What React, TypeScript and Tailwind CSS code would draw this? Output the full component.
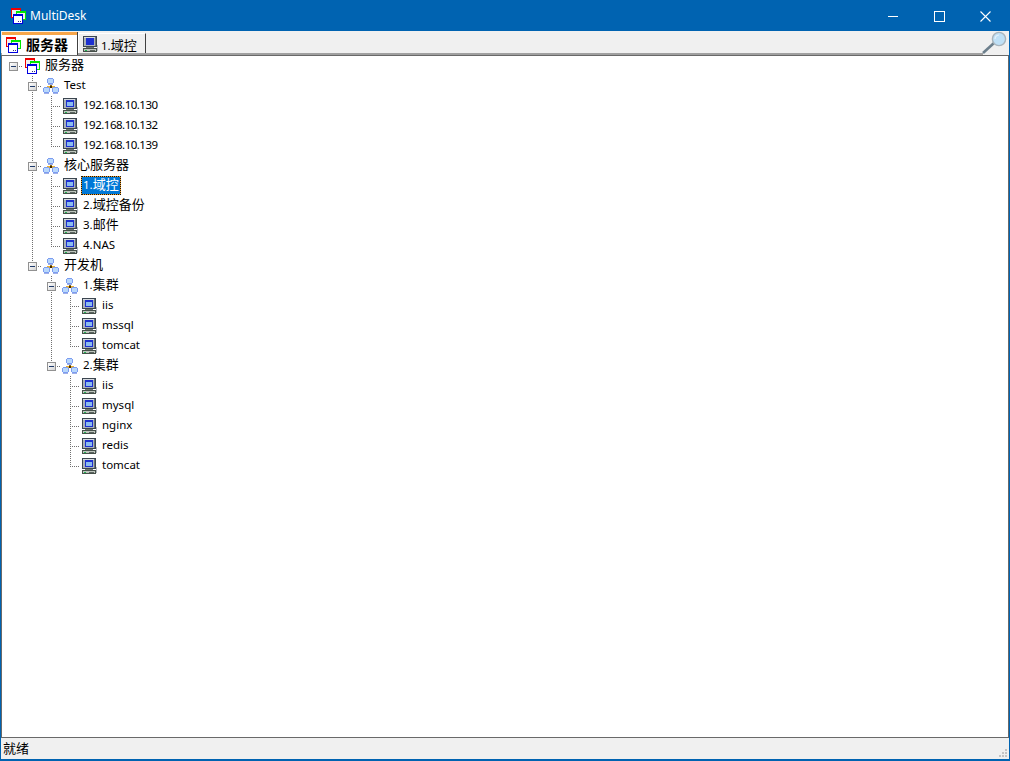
import React from "react";

type Kind = "root" | "group" | "pc";

interface TreeRow {
  label: string;
  kind: Kind;
  // one flag per ancestor level: does the vertical line carry on through this row
  guides: boolean[];
  last?: boolean;
  selected?: boolean;
}

const rows: TreeRow[] = [
  { label: "服务器", kind: "root", guides: [], last: true },
  { label: "Test", kind: "group", guides: [false] },
  { label: "192.168.10.130", kind: "pc", guides: [false, true] },
  { label: "192.168.10.132", kind: "pc", guides: [false, true] },
  { label: "192.168.10.139", kind: "pc", guides: [false, true], last: true },
  { label: "核心服务器", kind: "group", guides: [false] },
  { label: "1.域控", kind: "pc", guides: [false, true], selected: true },
  { label: "2.域控备份", kind: "pc", guides: [false, true] },
  { label: "3.邮件", kind: "pc", guides: [false, true] },
  { label: "4.NAS", kind: "pc", guides: [false, true], last: true },
  { label: "开发机", kind: "group", guides: [false], last: true },
  { label: "1.集群", kind: "group", guides: [false, false] },
  { label: "iis", kind: "pc", guides: [false, false, true] },
  { label: "mssql", kind: "pc", guides: [false, false, true] },
  { label: "tomcat", kind: "pc", guides: [false, false, true], last: true },
  { label: "2.集群", kind: "group", guides: [false, false], last: true },
  { label: "iis", kind: "pc", guides: [false, false, false] },
  { label: "mysql", kind: "pc", guides: [false, false, false] },
  { label: "nginx", kind: "pc", guides: [false, false, false] },
  { label: "redis", kind: "pc", guides: [false, false, false] },
  { label: "tomcat", kind: "pc", guides: [false, false, false], last: true },
];

const vDots =
  "absolute left-[9px] top-0 w-px bg-[repeating-linear-gradient(to_bottom,#707070_0,#707070_1px,transparent_1px,transparent_2px)]";
const hDots =
  "absolute left-[9px] top-[10px] h-px w-[10px] bg-[repeating-linear-gradient(to_right,#707070_0,#707070_1px,transparent_1px,transparent_2px)]";

// Latin text sits smaller than CJK, as the system font fallback does in the original
function Label({ text }: { text: string }) {
  const parts = text.match(/[\u4e00-\u9fff]+|[^\u4e00-\u9fff]+/g) ?? [];
  return (
    <>
      {parts.map((part, i) => {
        if (/[\u4e00-\u9fff]/.test(part)) {
          return (
            <span key={i} className="text-[13px]">
              {part}
            </span>
          );
        }
        const isIp = /^\d+\.\d+\.\d+\.\d+$/.test(part);
        return (
          <span key={i} className={isIp ? "text-[11.5px] tracking-[-0.5px]" : "text-[11.5px]"}>
            {part}
          </span>
        );
      })}
    </>
  );
}

function WindowsIcon() {
  return (
    <svg width="16" height="16" viewBox="0 0 16 16" shapeRendering="crispEdges" className="shrink-0">
      <rect x="1.5" y="0.5" width="9" height="9" fill="#f0f0f0" stroke="#f00000" />
      <rect x="1" y="0" width="10" height="2" fill="#f00000" />
      <rect x="6.5" y="3.5" width="9" height="8" fill="#f0f0f0" stroke="#00e800" />
      <rect x="6" y="3" width="10" height="2" fill="#00e800" />
      <rect x="3.5" y="6.5" width="9" height="9" fill="#fff" stroke="#0000e0" />
      <rect x="3" y="6" width="10" height="2" fill="#0000e0" />
      <rect x="8" y="13" width="1" height="1" fill="#303080" />
      <rect x="10" y="13" width="1" height="1" fill="#303080" />
    </svg>
  );
}

function ComputerIcon({ solid }: { solid?: boolean }) {
  return (
    <svg width="16" height="16" viewBox="0 0 16 16" shapeRendering="crispEdges" className="shrink-0">
      <rect x="1.5" y="0.5" width="13" height="10" fill="#aab2b8" stroke="#3c4650" />
      <rect x="2" y="1" width="11" height="1" fill="#d8dce0" />
      <rect x="13" y="1" width="1" height="9" fill="#68747c" />
      <rect x="4" y="2" width="8" height="7" fill="#1c30d0" />
      {!solid && <rect x="5" y="4" width="6" height="4" fill="#8cbcf0" />}
      <rect x="4" y="11" width="8" height="1" fill="#6c7470" />
      <rect x="1.5" y="12.5" width="13" height="3" fill="#bcc4bc" stroke="#46504a" />
      <rect x="3" y="14" width="2" height="1" fill="#20b050" />
      <rect x="8" y="14" width="5" height="1" fill="#5c6460" />
      <rect x="15" y="9" width="1" height="6" fill="#b4bac0" />
    </svg>
  );
}

function MiniPc({ x, y }: { x: number; y: number }) {
  return (
    <g>
      <rect x={x} y={y + 1} width="7" height="4" fill="#7c9cf0" />
      <rect x={x + 1} y={y} width="5" height="6" fill="#7c9cf0" />
      <rect x={x + 1} y={y + 1} width="5" height="4" fill="#b8d8fc" />
      <rect x={x + 1} y={y + 6} width="5" height="1" fill="#a0b0e8" />
    </g>
  );
}

function NetworkIcon() {
  return (
    <svg width="16" height="16" viewBox="0 0 16 16" shapeRendering="crispEdges" className="shrink-0">
      <rect x="7" y="6" width="2" height="3" fill="#8a6a20" />
      <rect x="4" y="8" width="8" height="2" fill="#eab030" />
      <rect x="7" y="8" width="2" height="2" fill="#3a2800" />
      <MiniPc x={4} y={0} />
      <MiniPc x={0} y={9} />
      <MiniPc x={9} y={9} />
    </svg>
  );
}

function Magnifier() {
  return (
    <svg width="28" height="24" viewBox="0 0 28 24" className="shrink-0">
      <line x1="2" y1="22" x2="13" y2="12" stroke="#6c7f8c" strokeWidth="2.6" />
      <circle cx="18" cy="8" r="6.6" fill="#bfe0f6" stroke="#a8b4bc" strokeWidth="1.4" />
      <path d="M14 8a4.5 4.5 0 0 1 4-4" fill="none" stroke="#e6f4fd" strokeWidth="1.2" />
    </svg>
  );
}

function Expander() {
  return (
    <span className="absolute left-[5px] top-[5.5px] flex h-[9px] w-[9px] items-center justify-center border border-[#919191] bg-gradient-to-br from-white to-[#d4d4d4]">
      <span className="h-px w-[5px] bg-[#1f3a6a]" />
    </span>
  );
}

function Row({ row }: { row: TreeRow }) {
  const expandable = row.kind !== "pc";
  return (
    <div className="flex h-5 items-center">
      {row.guides.map((on, i) => (
        <span key={i} className="relative h-5 w-[19px] shrink-0">
          {on && <span className={`${vDots} h-5`} />}
        </span>
      ))}
      <span className="relative h-5 w-[19px] shrink-0">
        {row.guides.length > 0 && <span className={`${vDots} ${row.last ? "h-[11px]" : "h-5"}`} />}
        <span className={hDots} />
        {expandable && <Expander />}
      </span>
      <span className="ml-px flex w-4 shrink-0 justify-center">
        {row.kind === "root" && <WindowsIcon />}
        {row.kind === "group" && <NetworkIcon />}
        {row.kind === "pc" && <ComputerIcon />}
      </span>
      <span
        className={`ml-[3px] mb-px flex h-[19px] items-center whitespace-nowrap px-[2px] pb-[2px] ${
          row.selected
            ? "bg-[#0078d7] text-white shadow-[inset_0_0_0_1px_#f0a030] outline-1 -outline-offset-1 outline-dotted outline-[#1a1408]"
            : "text-black"
        }`}
      >
        <Label text={row.label} />
      </span>
    </div>
  );
}

export default function App() {
  return (
    <div
      className="flex h-[761px] w-[1010px] flex-col overflow-hidden border border-b-2 border-[#0063b1] bg-[#f0f0f0] text-black"
      style={{ fontFamily: '"Noto Sans", "Noto Sans CJK SC", sans-serif' }}
    >
      {/* Title bar */}
      <div className="flex h-[30px] shrink-0 items-center bg-[#0063b1] pl-[9px] text-white">
        <WindowsIcon />
        <span className="ml-1 text-[12px]">MultiDesk</span>
        <div className="ml-auto flex items-center">
          <div className="flex h-[30px] w-[46px] items-center justify-center">
            <span className="mt-px h-px w-[10px] bg-white" />
          </div>
          <div className="flex h-[30px] w-[46px] items-center justify-center">
            <span className="h-[11px] w-[11px] border border-white" />
          </div>
          <div className="mr-px flex h-[30px] w-[46px] items-center justify-center">
            <svg width="11" height="11" viewBox="0 0 11 11" stroke="#fff" strokeWidth="1.1">
              <path d="M0.5 0.5l10 10M10.5 0.5l-10 10" />
            </svg>
          </div>
        </div>
      </div>

      {/* Tabs */}
      <div className="relative flex h-[24px] shrink-0 items-end pl-px">
        <div className="absolute bottom-0 left-0 right-[26px] h-[2px] bg-[#a0a0a0]" />
        <div className="relative z-10 flex h-[23px] w-[76px] items-center border-r border-r-[#404040] bg-white pl-[3px] pt-[3px] before:absolute before:left-0 before:right-0 before:top-0 before:h-[3px] before:bg-[#f7a64a] before:content-['']">
          <WindowsIcon />
          <span className="ml-[5px] text-[14px] font-bold leading-none">服务器</span>
        </div>
        <div className="relative z-10 mb-[2px] flex h-[20px] w-[68px] items-center border-r border-t border-l border-r-[#404040] border-t-white border-l-white bg-[#f0f0f0] pl-[3px]">
          <ComputerIcon solid />
          <span className="ml-[3px]">
            <Label text="1.域控" />
          </span>
        </div>
        <div className="absolute right-0 top-0">
          <Magnifier />
        </div>
      </div>

      {/* Tree */}
      <div className="min-h-0 flex-1 border border-[#696969] bg-white pl-[2px] pt-0">
        {rows.map((row, i) => (
          <Row key={i} row={row} />
        ))}
      </div>

      {/* Status bar */}
      <div className="relative flex h-[21px] shrink-0 items-center pl-[2px]">
        <span className="text-[13px]">就绪</span>
        <svg width="10" height="10" viewBox="0 0 10 10" fill="#c4c4c4" shapeRendering="crispEdges" className="absolute bottom-px right-px">
          <rect x="7" y="1" width="2" height="2" />
          <rect x="4" y="4" width="2" height="2" />
          <rect x="7" y="4" width="2" height="2" />
          <rect x="1" y="7" width="2" height="2" />
          <rect x="4" y="7" width="2" height="2" />
          <rect x="7" y="7" width="2" height="2" />
        </svg>
      </div>
    </div>
  );
}
